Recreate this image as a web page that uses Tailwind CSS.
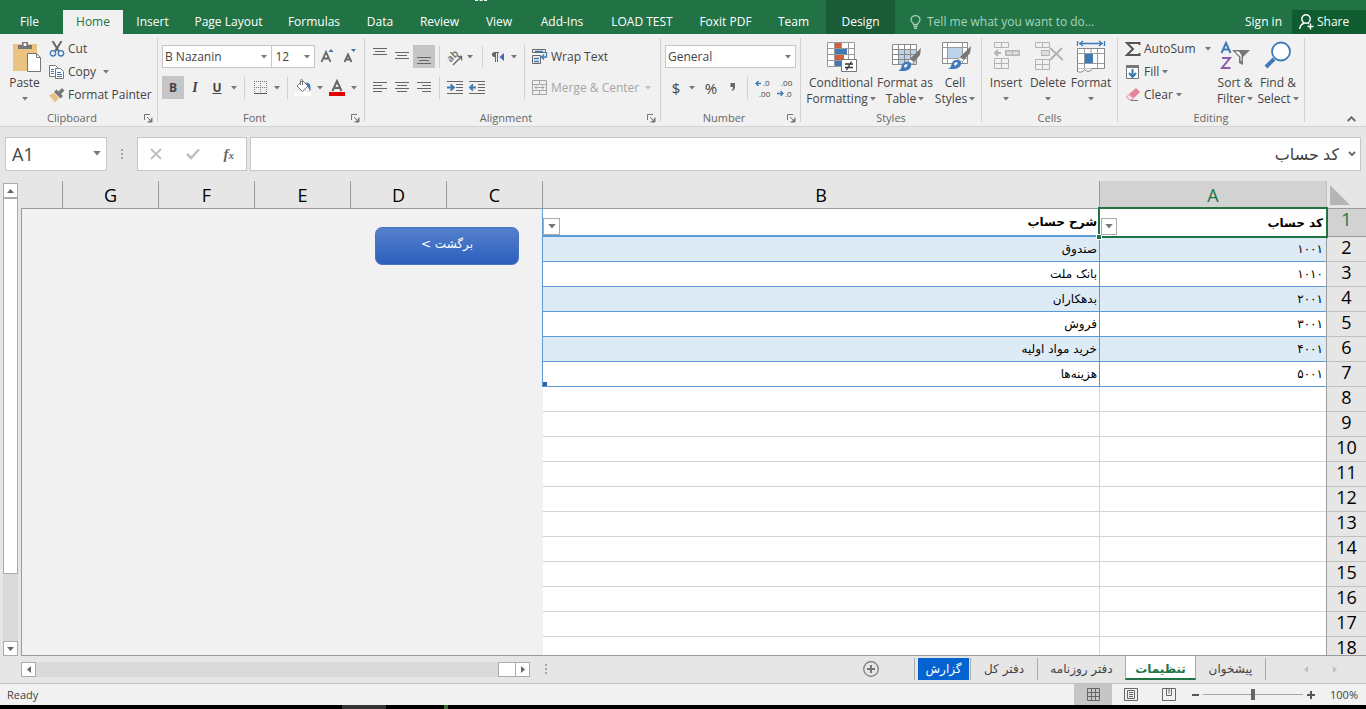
<!DOCTYPE html>
<html lang="en">
<head>
    <meta charset="UTF-8">
    <meta name="viewport" content="width=device-width, initial-scale=1.0">
    <title>تنظیمات - Excel</title>
    <script src="https://cdn.jsdelivr.net/npm/@tailwindcss/browser@4"></script>
</head>
<body class="h-screen flex flex-col overflow-hidden bg-[#e6e6e6] text-[#444] text-[12px] leading-4 font-['Open_Sans','DejaVu_Sans',sans-serif]">

<!-- shared icons -->
<svg class="hidden">
    <symbol id="caret" viewBox="0 0 6 4"><path d="M0 0h6L3 3.5z" fill="#777"/></symbol>
    <symbol id="launcher" viewBox="0 0 9 9"><path d="M.5 6V.5H6M3 3l4 4M8 3.500V8H3.500" fill="none" stroke="#777"/><path d="M8 4v4H4z" fill="#777"/></symbol>
    <symbol id="brush" viewBox="0 0 24 24"><path d="M23 0l-1 7-6 7-4-3z" fill="#777"/><path d="M12 11l4 3-2 2-4-3z" fill="#fff" stroke="#777" stroke-width=".6"/><path d="M0 23c3-1 3-3 4-6 2-4 7-4 9-1 1 4-3 7-7 7z" fill="#3e7ab8"/><path d="M6 18c1-2 3-2 4-1-1 0-1 2-3 3z" fill="#fff"/></symbol>
</svg>

<!-- ribbon tabs -->
<header class="relative flex h-[34px] shrink-0 items-end bg-[#217346] text-white">
    <span class="absolute left-[475px] top-0 h-px w-3 border-t border-dashed border-white"></span>
    <nav class="flex h-6">
        <button class="w-[63px] pr-1">File</button>
        <button class="w-[60px] bg-[#f1f1f1] text-[#217346]">Home</button>
        <button class="w-[59px]">Insert</button>
        <button class="w-[93px]">Page Layout</button>
        <button class="w-[78px]">Formulas</button>
        <button class="w-[54px]">Data</button>
        <button class="w-[65px]">Review</button>
        <button class="w-[54px]">View</button>
        <button class="w-[72px]">Add-Ins</button>
        <button class="w-[88px]">LOAD TEST</button>
        <button class="w-[79px]">Foxit PDF</button>
        <button class="w-[61px] pr-1">Team</button>
    </nav>
    <button class="h-full w-[69px] bg-[#1a5c38] pt-[10px]">Design</button>
    <label class="flex h-6 flex-1 items-center gap-[6px] pl-[15px] text-[#a6d3b9]">
        <svg class="h-[14px] w-[11px]" viewBox="0 0 11 14" fill="none" stroke="#a6d3b9" stroke-width="1.3"><path d="M3.500 9.500C3.500 8 1 7 1 4.800a4.500 4.200 0 0 1 9 0C10 7 7.500 8 7.500 9.500zM3.500 11.500h4M4 13.300h3"/></svg>
        <input type="text" placeholder="Tell me what you want to do..." aria-label="Tell me what you want to do" class="w-[200px] bg-transparent outline-none placeholder:text-[#a6d3b9]">
    </label>
    <button class="h-6 px-[10px]">Sign in</button>
    <button class="flex h-6 w-[74px] items-center gap-[3px] bg-[#0e5c2f] pl-[7px]">
        <svg class="h-4 w-[15px]" viewBox="0 0 15 16" fill="none" stroke="#fff" stroke-width="1.4"><circle cx="7" cy="5" r="4.200"/><path d="M.7 15c.3-3 2-5 4.500-6M8.800 9l1.200 1M11.500 9.500v6M8.500 12.500h6"/></svg>
        Share
    </button>
</header>

<!-- ribbon -->
<section class="flex h-[93px] shrink-0 border-b border-[#d2d2d2] bg-[#f1f1f1] pt-1">

    <div class="flex h-[84px] w-[158px] shrink-0 flex-col border-r border-[#d2d2d2]">
        <div class="flex h-[76px]">
            <button class="flex w-[49px] flex-col items-center">
                <svg class="mt-[3px] h-[34px] w-8" viewBox="0 0 32 34"><path d="M4 3h24v27H4z" fill="#eac282"/><path d="M9 8V4h4V1h6v3h4v4z" fill="#777"/><circle cx="16" cy="3.500" r="1.500" fill="#fff"/><path d="M18.500 12.500h9l4 4v14h-13z" fill="#fff" stroke="#777"/><path d="M27.500 12.500v4h4" fill="none" stroke="#777"/></svg>
                <span>Paste</span>
                <svg class="mt-1.5 h-1 w-1.5"><use href="#caret"/></svg>
            </button>
            <div class="flex flex-col gap-[2px] whitespace-nowrap">
                <button class="flex h-[21px] items-center gap-[3px]">
                    <svg class="h-4 w-4" viewBox="0 0 16 16" fill="none"><path d="M3.500 0l6.500 10.500M12.500 0L6 10.500" stroke="#666" stroke-width="2"/><circle cx="4" cy="12.300" r="2.700" stroke="#3e7ab8" stroke-width="1.300"/><circle cx="12" cy="12.300" r="2.700" stroke="#3e7ab8" stroke-width="1.300"/></svg>
                    Cut
                </button>
                <button class="flex h-[21px] items-center gap-[3px]">
                    <svg class="h-4 w-4" viewBox="0 0 16 16" fill="#fff" stroke="#777"><path d="M.5 1.500h6l2 2v9h-8z"/><path d="M2 5.500h3M2 7.500h3M2 9.500h3" stroke="#3e7ab8"/><path d="M6.500 4.500h5l3 3v7h-8z"/><path d="M8 8.500h4M8 10.500h5M8 12.500h5" stroke="#3e7ab8"/></svg>
                    Copy
                    <svg class="ml-1 h-1 w-1.5"><use href="#caret"/></svg>
                </button>
                <button class="flex h-[21px] items-center gap-[3px]">
                    <svg class="h-4 w-4" viewBox="0 0 16 16"><path d="M0 8l5-2 5 5-4 4.500z" fill="#eac282"/><path d="M5 5l2.500-2.500L14 9l-2.500 2.500z" fill="#777"/><path d="M9 5l4-4 2.500 2.500-4 4z" fill="#777"/></svg>
                    Format Painter
                </button>
            </div>
        </div>
        <div class="flex h-[8px] items-center pr-[4px] text-[11px] text-[#666]"><span class="flex-1 text-center">Clipboard</span><svg class="h-[9px] w-[9px]"><use href="#launcher"/></svg></div>
    </div>

    <div class="flex h-[84px] w-[207px] shrink-0 flex-col border-r border-[#d2d2d2]">
        <div class="flex h-[76px] flex-col gap-2 pl-1 pt-[7px]">
            <div class="flex h-[23px] items-center">
                <div class="relative h-[23px] w-[111px]">
                    <select aria-label="Font" class="h-full w-full appearance-none border border-[#c6c6c6] bg-white pl-[2px]"><option>B Nazanin</option></select>
                    <svg class="absolute right-[5px] top-[10px] h-1 w-1.5"><use href="#caret"/></svg>
                </div>
                <div class="relative h-[23px] w-[43px]">
                    <select aria-label="Font size" class="h-full w-full appearance-none border border-l-0 border-[#c6c6c6] bg-white pl-[3px]"><option>12</option></select>
                    <svg class="absolute right-[5px] top-[10px] h-1 w-1.5"><use href="#caret"/></svg>
                </div>
                <button aria-label="Increase font size" class="ml-[5px] w-[22px]"><svg class="h-5 w-[14px]" viewBox="0 0 14 20"><path d="M1.500 15L6 5l4.500 10M3 11.500h6" fill="none" stroke="#666" stroke-width="1.800"/><path d="M8.500 5L11 2l2.500 3z" fill="#3e6db5"/></svg></button>
                <button aria-label="Decrease font size" class="w-[22px]"><svg class="h-5 w-[14px]" viewBox="0 0 14 20"><path d="M2.500 15L6 7.500 9.500 15M4 12.500h4" fill="none" stroke="#666" stroke-width="1.800"/><path d="M9 2h5l-2.500 3z" fill="#3e6db5"/></svg></button>
            </div>
            <div class="flex h-[23px] items-center">
                <button class="h-full w-[22px] bg-[#c5c5c5] font-bold">B</button>
                <button class="h-full w-[22px] font-['Liberation_Serif',serif] text-[14px] font-bold italic">I</button>
                <button class="h-full w-[22px] font-bold underline">U</button>
                <svg class="mx-[3px] h-1 w-1.5"><use href="#caret"/></svg>
                <span class="mx-1 h-[22px] w-px bg-[#d2d2d2]"></span>
                <button aria-label="Borders" class="flex w-[22px] justify-center"><svg class="h-[13px] w-[13px]" viewBox="0 0 13 13" fill="none" stroke="#777"><path d="M0 .5h13M0 6.500h13M.5 0v12M6.500 0v12M12.500 0v12" stroke-dasharray="1 1"/><path d="M0 12.500h13" stroke="#555"/></svg></button>
                <svg class="mx-[3px] h-1 w-1.5"><use href="#caret"/></svg>
                <span class="mx-1 h-[22px] w-px bg-[#d2d2d2]"></span>
                <button aria-label="Fill color" class="flex w-[22px] justify-center"><svg class="h-[17px] w-4" viewBox="0 0 16 17"><path d="M0 13h16v4H0z" fill="#fff"/><path d="M2 7l5.500-5.500L13 7l-5.500 5.500zM5.500 6V1.500c0-1.500 2-1.500 2 0V6" fill="#fff" stroke="#777"/><path d="M11 3.500c4 0 5.500 3 4 9.500-1-3-1-4-2.500-5.500z" fill="#3e7ab8"/></svg></button>
                <svg class="mx-[3px] h-1 w-1.5"><use href="#caret"/></svg>
                <button aria-label="Font color" class="flex w-[22px] justify-center"><svg class="h-[17px] w-4" viewBox="0 0 16 17"><path d="M3.500 12L8 2l4.500 10M5 9h6" fill="none" stroke="#666" stroke-width="2"/><path d="M0 13h16v4H0z" fill="#e50000"/></svg></button>
                <svg class="mx-[3px] h-1 w-1.5"><use href="#caret"/></svg>
            </div>
        </div>
        <div class="flex h-[8px] items-center pr-[4px] text-[11px] text-[#666]"><span class="flex-1 text-center">Font</span><svg class="h-[9px] w-[9px]"><use href="#launcher"/></svg></div>
    </div>

    <div class="flex h-[84px] w-[296px] shrink-0 flex-col border-r border-[#d2d2d2]">
        <div class="flex h-[76px] pl-1 pt-[7px]">
            <div class="flex h-[54px] w-[156px] flex-col gap-2 border-r border-[#d2d2d2]">
                <div class="flex h-[23px] items-center">
                    <button aria-label="Top align" class="flex h-full w-[22px] justify-center pt-[2px]"><svg class="h-4 w-[14px]" viewBox="0 0 14 16" stroke="#666"><path d="M0 1.500h14M2 4.500h10M0 7.500h14"/></svg></button>
                    <button aria-label="Middle align" class="flex h-full w-[22px] justify-center pt-[3px]"><svg class="h-4 w-[14px]" viewBox="0 0 14 16" stroke="#666"><path d="M0 4.500h14M2 7.500h10M0 10.500h14"/></svg></button>
                    <button aria-label="Bottom align" class="flex h-full w-[22px] justify-center bg-[#c5c5c5] pt-[4px]"><svg class="h-4 w-[14px]" viewBox="0 0 14 16" stroke="#666"><path d="M0 8.500h14M2 11.500h10M0 14.500h14"/></svg></button>
                    <span class="mx-1 h-[22px] w-px bg-[#d2d2d2]"></span>
                    <button aria-label="Orientation" class="flex w-[22px] justify-center"><svg class="h-[22px] w-[22px]" viewBox="0 0 22 22"><text x="3" y="14" transform="rotate(-45 8 11)" font-size="10" font-weight="600" fill="#666">ab</text><path d="M9 19l8-8M13.500 10.500H17.500v4" fill="none" stroke="#666" stroke-width="1.300"/></svg></button>
                    <svg class="mx-px h-1 w-1.5"><use href="#caret"/></svg>
                    <span class="ml-[8px] mr-[5px] h-[22px] w-px bg-[#d2d2d2]"></span>
                    <button aria-label="Text direction" class="flex w-[20px] justify-center"><svg class="h-3 w-[14px]" viewBox="0 0 14 12"><path d="M8 1H3.500a2.500 2.500 0 0 0 0 5H4v5h1V2h1v9h1V2h1z" fill="#666"/><path d="M13 2v8L8.500 6z" fill="#3e6db5"/></svg></button>
                    <svg class="mx-[3px] h-1 w-1.5"><use href="#caret"/></svg>
                </div>
                <div class="flex h-[23px] items-center">
                    <button aria-label="Align left" class="flex w-[22px] justify-center"><svg class="h-3 w-[14px]" viewBox="0 0 14 12" stroke="#666"><path d="M0 .5h14M0 3.500h9M0 6.500h14M0 9.500h9"/></svg></button>
                    <button aria-label="Center" class="flex w-[22px] justify-center"><svg class="h-3 w-[14px]" viewBox="0 0 14 12" stroke="#666"><path d="M0 .5h14M2 3.500h10M0 6.500h14M2 9.500h10"/></svg></button>
                    <button aria-label="Align right" class="flex w-[22px] justify-center"><svg class="h-3 w-[14px]" viewBox="0 0 14 12" stroke="#666"><path d="M0 .5h14M5 3.500h9M0 6.500h14M5 9.500h9"/></svg></button>
                    <span class="mx-1 h-[22px] w-px bg-[#d2d2d2]"></span>
                    <button aria-label="Decrease indent" class="flex w-[22px] justify-center"><svg class="h-[13px] w-4" viewBox="0 0 16 13" fill="none" stroke="#666"><path d="M0 .5h16M9 3.500h7M9 6.500h7M9 9.500h7M0 12.500h16"/><path d="M0 6.500h6M3.500 3.500L7 6.500 3.500 9.500" stroke="#3e7ab8" stroke-width="1.800"/></svg></button>
                    <button aria-label="Increase indent" class="flex w-[22px] justify-center"><svg class="h-[13px] w-4" viewBox="0 0 16 13" fill="none" stroke="#666"><path d="M0 .5h16M9 3.500h7M9 6.500h7M9 9.500h7M0 12.500h16"/><path d="M1 6.500h6M4 3.500L1 6.500l3 3" stroke="#3e7ab8" stroke-width="1.800"/></svg></button>
                </div>
            </div>
            <div class="flex flex-col gap-2 whitespace-nowrap pl-[7px]">
                <button class="flex h-[23px] items-center gap-[3px]">
                    <svg class="h-4 w-4" viewBox="0 0 16 16" fill="none" stroke="#666"><path d="M.5.500h13v3H.5zM.5 6.500h8v8H.5z"/><path d="M2 9.500h5M2 12.500h5M3 2.500h8M14.500 3v5H10M12 5.500L9.500 8l2.500 2.500" stroke="#3e7ab8" stroke-width="1.300"/></svg>
                    Wrap Text
                </button>
                <button disabled class="flex h-[23px] items-center gap-[3px] text-[#a6a6a6]">
                    <svg class="h-4 w-4" viewBox="0 0 16 16" fill="none" stroke="#a6a6a6"><path d="M.5.500h14v14H.5zM.5 4.500h14M.5 10.500h14M7.500.500v4M7.500 10.500v4M3 7.500h9M5 5.500l-2 2 2 2M10 5.500l2 2-2 2"/></svg>
                    Merge &amp; Center
                    <svg class="ml-[3px] h-1 w-1.5 opacity-40"><use href="#caret"/></svg>
                </button>
            </div>
        </div>
        <div class="flex h-[8px] items-center pr-[4px] text-[11px] text-[#666]"><span class="flex-1 text-center">Alignment</span><svg class="h-[9px] w-[9px]"><use href="#launcher"/></svg></div>
    </div>

    <div class="flex h-[84px] w-[140px] shrink-0 flex-col border-r border-[#d2d2d2]">
        <div class="flex h-[76px] flex-col gap-2 pl-1 pt-[7px]">
            <div class="relative h-[23px] w-[131px]">
                <select aria-label="Number format" class="h-full w-full appearance-none border border-[#c6c6c6] bg-white pl-[2px]"><option>General</option></select>
                <svg class="absolute right-[5px] top-[10px] h-1 w-1.5"><use href="#caret"/></svg>
            </div>
            <div class="flex h-[23px] items-center">
                <button class="w-[22px] text-[15px]">$</button>
                <svg class="mx-[2px] h-1 w-1.5"><use href="#caret"/></svg>
                <button class="ml-[3px] w-[22px] text-[15px]">%</button>
                <button aria-label="Comma style" class="flex w-[22px] justify-center"><svg class="h-[14px] w-2" viewBox="0 0 8 14"><path d="M1.500 2h4.500v4c0 2-1 3-3 4l-.5-1C4 8.500 4 7 4 6H1.500z" fill="#666"/></svg></button>
                <span class="ml-[3px] mr-1 h-[22px] w-px bg-[#d2d2d2]"></span>
                <button aria-label="Increase decimal" class="flex w-[22px] justify-center"><svg class="h-[22px] w-5" viewBox="0 0 20 22"><text x="10" y="9" font-size="8" fill="#444">.0</text><text x="6" y="20" font-size="8" fill="#444">.00</text><path d="M3 6.500h5M5.500 4L3 6.500 5.500 9" fill="none" stroke="#3e7ab8" stroke-width="1.300"/></svg></button>
                <button aria-label="Decrease decimal" class="flex w-[22px] justify-center"><svg class="h-[22px] w-5" viewBox="0 0 20 22"><text x="6" y="9" font-size="8" fill="#444">.00</text><text x="10" y="20" font-size="8" fill="#444">.0</text><path d="M2 16.500h6M5.500 14L8 16.500 5.500 19" fill="none" stroke="#3e7ab8" stroke-width="1.300"/></svg></button>
            </div>
        </div>
        <div class="flex h-[8px] items-center pr-[4px] text-[11px] text-[#666]"><span class="flex-1 text-center">Number</span><svg class="h-[9px] w-[9px]"><use href="#launcher"/></svg></div>
    </div>

    <div class="flex h-[84px] w-[181px] shrink-0 flex-col border-r border-[#d2d2d2]">
        <div class="flex h-[76px] justify-center">
            <button class="flex w-[72px] flex-col items-center whitespace-nowrap">
                <svg class="mt-[3px] h-[34px] w-[34px]" viewBox="0 0 34 34"><path d="M3.500 1.500h27v24h-27z" fill="#fff"/><path d="M11 2h6v5h-6zM11 14h9v5h-9z" fill="#d35e3c"/><path d="M11 8h12v5H11zM11 20h6v5h-6z" fill="#3e7ab8"/><path d="M3.500 1.500h27v24h-27zM10.500 1.500v24M17.500 1.500v24M24.500 1.500v24M3.500 7.500h27M3.500 13.500h27M3.500 19.500h27" fill="none" stroke="#999"/><path d="M11 2h6v5h-6zM11 14h9v5h-9z" fill="#d35e3c"/><path d="M11 8h12v5H11zM11 20h6v5h-6z" fill="#3e7ab8"/><path d="M17.500 18.500h15v12h-15z" fill="#fff" stroke="#777"/><path d="M21 23h8M21 26.500h8M27.500 20.500l-5 8.500" stroke="#333" stroke-width="1.300"/></svg>
                <span>Conditional</span>
                <span class="flex items-center gap-[2px]">Formatting <svg class="h-1 w-1.5"><use href="#caret"/></svg></span>
            </button>
            <button class="flex w-[56px] flex-col items-center whitespace-nowrap">
                <svg class="mt-[3px] h-[34px] w-[34px]" viewBox="0 0 34 34"><path d="M4.500 3.500h24v20h-24z" fill="#fff"/><path d="M10 9h18v14H10z" fill="#bdd3ea"/><path d="M4.500 3.500h24v20h-24zM10.500 3.500v20M16.500 3.500v20M22.500 3.500v20M4.500 8.500h24M4.500 13.500h24M4.500 18.500h24" fill="none" stroke="#888"/><use href="#brush" x="10" y="7" width="24" height="24"/></svg>
                <span>Format as</span>
                <span class="flex items-center gap-[2px]">Table <svg class="h-1 w-1.5"><use href="#caret"/></svg></span>
            </button>
            <button class="flex w-[44px] flex-col items-center whitespace-nowrap">
                <svg class="mt-[3px] h-[34px] w-[34px]" viewBox="0 0 34 34"><path d="M4.500 1.500h25v21h-25z" fill="#fff" stroke="#888"/><path d="M4.500 6.500h25M4.500 17.500h25M9.500 1.500v21M24.500 1.500v21" stroke="#999"/><path d="M10 7h14v10H10z" fill="#bdd3ea"/><use href="#brush" x="10" y="5" width="24" height="24"/></svg>
                <span>Cell</span>
                <span class="flex items-center gap-[2px]">Styles <svg class="h-1 w-1.5"><use href="#caret"/></svg></span>
            </button>
        </div>
        <div class="flex h-[8px] items-center justify-center text-[11px] text-[#666]">Styles</div>
    </div>

    <div class="flex h-[84px] w-[136px] shrink-0 flex-col border-r border-[#d2d2d2]">
        <div class="flex h-[76px] pl-[3px]">
            <button class="flex w-[42px] flex-col items-center">
                <svg class="mt-[3px] h-[34px] w-[30px]" viewBox="0 0 30 34" fill="#f1f1f1" stroke="#b5b0b5"><path d="M3.500 1.500h14v5h-14zM10.500 1.500v5M3.500 17.500h14v10h-14zM10.500 17.500v10M3.500 22.500h14M14.500 9.500h14v5h-14z"/><path d="M15 10h13v4H15z" fill="#ddd"/><path d="M21.500 9.500v5"/><path d="M4 12h6M7 9l-3 3 3 3" fill="none" stroke-width="1.800"/></svg>
                <span>Insert</span>
                <svg class="mt-1.5 h-1 w-1.5"><use href="#caret"/></svg>
            </button>
            <button class="flex w-[42px] flex-col items-center">
                <svg class="mt-[3px] h-[34px] w-[30px]" viewBox="0 0 30 34" fill="#f1f1f1" stroke="#b5b0b5"><path d="M2.500 1.500h14v5h-14zM9.500 1.500v5M2.500 18.500h14v10h-14zM9.500 18.500v10M2.500 23.500h14"/><path d="M8.500 9.500h8v5h-8z" fill="#ddd"/><path d="M17 7l13 12M29 7L17 19" fill="none" stroke-width="2"/></svg>
                <span>Delete</span>
                <svg class="mt-1.5 h-1 w-1.5"><use href="#caret"/></svg>
            </button>
            <button class="flex w-[44px] flex-col items-center">
                <svg class="mt-[2px] h-[35px] w-[30px]" viewBox="0 0 30 35" fill="none"><path d="M1.500 1v5M28.500 1v5M3 3.500h24M7 1L4 3.500 7 6M23 1l3 2.500L23 6" stroke="#3e7ab8" stroke-width="1.300"/><path d="M1.500 8.500h27v20h-27z" fill="#fff" stroke="#888"/><path d="M8.500 8.500v20M21.500 8.500v20M1.500 13.500h27M1.500 23.500h27M15 8.500v5" stroke="#999"/><path d="M9 14h8v9H9z" fill="#3e7ab8"/><path d="M1.500 28.500v3c3 1 5 1 7-2 3 3 6 2 8-1" fill="#fff" stroke="#777"/></svg>
                <span>Format</span>
                <svg class="mt-1.5 h-1 w-1.5"><use href="#caret"/></svg>
            </button>
        </div>
        <div class="flex h-[8px] items-center justify-center text-[11px] text-[#666]">Cells</div>
    </div>

    <div class="flex h-[84px] w-[187px] shrink-0 flex-col border-r border-[#d2d2d2]">
        <div class="flex h-[76px] pl-[7px]">
            <div class="flex w-[89px] flex-col gap-[2px]">
                <button class="flex h-[21px] items-center gap-[3px]">
                    <svg class="h-4 w-4" viewBox="0 0 16 16"><path d="M14.500 4V2H2l6 6-6 6h12.500v-2" fill="none" stroke="#555" stroke-width="2"/></svg>
                    AutoSum
                    <svg class="ml-1.5 h-1 w-1.5"><use href="#caret"/></svg>
                </button>
                <button class="flex h-[21px] items-center gap-[3px]">
                    <svg class="h-4 w-4" viewBox="0 0 16 16" fill="none"><path d="M1.500 1.500h12v13h-12z" fill="#fff" stroke="#777"/><path d="M1 1h13v3H1z" fill="#777"/><path d="M7.500 5v8M4 9l3.500 4L11 9" stroke="#3e7ab8" stroke-width="2"/></svg>
                    Fill
                    <svg class="h-1 w-1.5"><use href="#caret"/></svg>
                </button>
                <button class="flex h-[21px] items-center gap-[3px]">
                    <svg class="h-4 w-4" viewBox="0 0 16 16"><path d="M4 7l7-6 4 4-6 6z" fill="#e8839b"/><path d="M4 7.500L1.500 10l3 3h2l2-2z" fill="#fbe3e8" stroke="#e8839b"/><path d="M6 13.500h7" stroke="#777"/></svg>
                    Clear
                    <svg class="h-1 w-1.5"><use href="#caret"/></svg>
                </button>
            </div>
            <button class="flex w-[42px] flex-col items-center whitespace-nowrap">
                <svg class="mt-[3px] h-[34px] w-[32px]" viewBox="0 0 32 34" fill="none"><path d="M2.500 12L7 2l4.500 10M4 8.500h6" stroke="#3e7ab8" stroke-width="2"/><path d="M3 17h8L3 27h8.500" stroke="#8b5ca8" stroke-width="2"/><path d="M13 9h18l-7 7v8l-4-2v-6z" fill="#777"/><path d="M16 10.500h4l2.500 4v6l-1-1v-4z" fill="#fff"/></svg>
                <span>Sort &amp;</span>
                <span class="flex items-center gap-[2px]">Filter <svg class="h-1 w-1.5"><use href="#caret"/></svg></span>
            </button>
            <button class="flex w-[44px] flex-col items-center whitespace-nowrap">
                <svg class="mt-[3px] h-[34px] w-[32px]" viewBox="0 0 32 34"><path d="M12 18L4 26" stroke="#3e7ab8" stroke-width="4"/><circle cx="19" cy="10.500" r="9" fill="#fff" stroke="#3e7ab8" stroke-width="1.800"/></svg>
                <span>Find &amp;</span>
                <span class="flex items-center gap-[2px]">Select <svg class="h-1 w-1.5"><use href="#caret"/></svg></span>
            </button>
        </div>
        <div class="flex h-[8px] items-center justify-center text-[11px] text-[#666]">Editing</div>
    </div>

    <button aria-label="Collapse the ribbon" class="ml-auto self-end pb-1 pr-[10px]"><svg class="h-[6px] w-[9px]" viewBox="0 0 9 6"><path d="M.7 5L4.500 1.300 8.300 5" fill="none" stroke="#666" stroke-width="1.800"/></svg></button>
</section>

<!-- formula bar -->
<section class="flex h-[54px] shrink-0 items-start pl-[5px] pr-[5px] pt-[10px]">
    <div class="relative h-[34px] w-[102px]">
        <input type="text" value="A1" aria-label="Name box" class="h-full w-full border border-[#c6c6c6] bg-white pl-[6px] text-[18px]">
        <svg class="absolute right-[6px] top-[14px] h-[5px] w-2"><use href="#caret"/></svg>
    </div>
    <svg class="mx-[14px] mt-3 h-[10px] w-[2px]" viewBox="0 0 2 10" fill="#a6a6a6"><path d="M0 0h2v2H0zM0 4h2v2H0zM0 8h2v2H0z"/></svg>
    <div class="flex h-[34px] w-[110px] items-center justify-around border border-[#c6c6c6] bg-white">
        <button aria-label="Cancel"><svg class="h-3 w-3" viewBox="0 0 12 12"><path d="M1 1l10 10M11 1L1 11" stroke="#bdbdbd" stroke-width="1.800"/></svg></button>
        <button aria-label="Enter"><svg class="h-3 w-[14px]" viewBox="0 0 14 12"><path d="M1 6l4 4 8-8.500" fill="none" stroke="#bdbdbd" stroke-width="2.500"/></svg></button>
        <button class="font-['Liberation_Serif',serif] text-[15px] font-bold italic text-[#666]">f<span class="text-[11px]">x</span></button>
    </div>
    <div class="ml-[3px] flex h-[34px] flex-1 items-center border border-[#c6c6c6] bg-white pr-1">
        <input type="text" dir="rtl" value="کد حساب" aria-label="Formula bar" class="min-w-0 flex-1 bg-transparent pr-[9px] text-[16px] outline-none">
        <button aria-label="Expand formula bar"><svg class="h-[6px] w-2" viewBox="0 0 8 6"><path d="M1 1l3 3 3-3" fill="none" stroke="#666" stroke-width="1.800"/></svg></button>
    </div>
</section>

<!-- worksheet -->
<main class="flex min-h-0 flex-1">
    <div class="flex w-[21px] shrink-0 flex-col pl-[3px] pr-[3px] pt-[2px]">
        <button aria-label="Scroll up" class="flex h-[15px] items-center justify-center border border-[#ababab] bg-white"><svg class="h-1 w-[7px]" viewBox="0 0 7 4"><path d="M0 4h7L3.500 0z" fill="#666"/></svg></button>
        <div class="flex flex-1 flex-col bg-[#dadada]"><div class="h-[376px] border border-[#ababab] bg-white"></div></div>
        <button aria-label="Scroll down" class="flex h-[15px] items-center justify-center border border-[#ababab] bg-white"><svg class="h-1 w-[7px]" viewBox="0 0 7 4"><path d="M0 0h7L3.500 4z" fill="#666"/></svg></button>
    </div>
    <div class="relative min-w-0 flex-1 overflow-hidden border-b border-[#9b9b9b]">
        <table dir="rtl" class="w-full table-fixed border-separate border-spacing-0">
            <colgroup>
                <col class="w-[40px]"><col class="w-[227px]"><col>
                <col class="w-[96px]"><col class="w-[96px]"><col class="w-[96px]"><col class="w-[96px]"><col class="w-[96px]"><col class="w-[41px]">
            </colgroup>
            <thead>
                <tr class="h-[28px] text-[18px] leading-[22px] text-black">
                    <th class="border-b border-l border-[#9b9b9b] border-l-[#c0c0c0] p-0"><svg class="ml-[3px] mr-auto h-5 w-5" viewBox="0 0 20 20"><path d="M0 0v20h20z" fill="#b5b5b5"/></svg></th>
                    <th class="border-b border-l border-[#9b9b9b] bg-[#d2d2d2] p-0 font-normal text-[#217346]">A</th>
                    <th class="border-b border-l border-[#9b9b9b] p-0 font-normal">B</th>
                    <th class="border-b border-l border-[#9b9b9b] p-0 font-normal">C</th>
                    <th class="border-b border-l border-[#9b9b9b] p-0 font-normal">D</th>
                    <th class="border-b border-l border-[#9b9b9b] p-0 font-normal">E</th>
                    <th class="border-b border-l border-[#9b9b9b] p-0 font-normal">F</th>
                    <th class="border-b border-l border-[#9b9b9b] p-0 font-normal">G</th>
                    <th class="border-b border-[#9b9b9b] p-0"></th>
                </tr>
            </thead>
            <tbody id="rows" class="font-['DejaVu_Sans',sans-serif] text-[12px] leading-4 text-black">
                <tr class="h-[28px] bg-white">
                    <th class="border-b border-l border-[#9b9b9b] bg-[#d2d2d2] p-0 align-top font-['Open_Sans',sans-serif] text-[18px] font-normal leading-[20px] text-[#217346]">1</th>
                    <th class="relative border-b border-l border-[#5b9bd5] p-0 pr-[3px] text-right font-bold">کد حساب
                        <span class="absolute -inset-[2px] z-10 border-2 border-[#217346]"></span>
                        <span class="absolute -bottom-[4px] -left-[4px] z-10 h-[6px] w-[6px] border border-white bg-[#217346]"></span>
                        <button aria-label="Filter" class="absolute bottom-px left-[1px] z-10 flex h-[17px] w-[16px] items-center justify-center border border-[#ababab] bg-white"><svg class="h-[5px] w-2"><use href="#caret"/></svg></button>
                    </th>
                    <th class="relative border-b-2 border-l border-[#5b9bd5] p-0 pr-[2px] text-right font-bold">شرح حساب
                        <button aria-label="Filter" class="absolute bottom-0 left-0 flex h-[17px] w-[17px] items-center justify-center border border-[#ababab] bg-white"><svg class="h-[5px] w-2"><use href="#caret"/></svg></button>
                    </th>
                    <td colspan="6" rowspan="18" class="border-l border-[#9b9b9b] bg-[#f1f1f1] p-0 pr-[23px] pt-[18px] text-right align-top">
                        <button class="h-[38px] w-[144px] rounded-[7px] border border-[#4a74bf] bg-linear-to-b from-[#5580cc] to-[#2b5fbd] pb-1 text-[12px] text-white">برگشت &gt;</button>
                    </td>
                </tr>
            </tbody>
        </table>
    </div>
</main>

<!-- sheet tabs -->
<section class="flex h-[28px] shrink-0 items-start border-b border-[#c0c0c0] pl-[21px] font-['DejaVu_Sans',sans-serif] text-[12px]">
    <button aria-label="Scroll left" class="mt-[6px] flex h-[15px] w-[15px] items-center justify-center border border-[#ababab] bg-white"><svg class="h-[7px] w-1" viewBox="0 0 4 7"><path d="M4 0v7L0 3.500z" fill="#666"/></svg></button>
    <div class="mt-[6px] flex h-[15px] w-[479px] justify-end bg-[#dadada]"><div class="w-[17px] border border-r-0 border-[#ababab] bg-white"></div></div>
    <button aria-label="Scroll right" class="mt-[6px] flex h-[15px] w-[15px] items-center justify-center border border-[#ababab] bg-white"><svg class="h-[7px] w-1" viewBox="0 0 4 7"><path d="M0 0v7l4-3.500z" fill="#666"/></svg></button>
    <svg class="ml-[15px] mt-2 h-[10px] w-[2px]" viewBox="0 0 2 10" fill="#a6a6a6"><path d="M0 0h2v2H0zM0 4h2v2H0zM0 8h2v2H0z"/></svg>
    <button aria-label="New sheet" class="ml-auto mt-[5px]"><svg class="h-4 w-4" viewBox="0 0 16 16" fill="none" stroke="#777"><circle cx="8" cy="8" r="7.300" stroke-width="1.200"/><path d="M8 4v8M4 8h8" stroke-width="2"/></svg></button>
    <div class="ml-[35px] mt-[2px] flex h-[22px] border-l border-[#ababab] pl-[3px]">
        <button class="w-[51px] bg-[#0563d1] text-white">گزارش</button>
        <button class="ml-px w-[68px] border-x border-[#ababab]">دفتر کل</button>
        <button class="w-[87px]">دفتر روزنامه</button>
    </div>
    <button class="h-[24px] w-[71px] border-x border-b-2 border-x-[#ababab] border-b-[#217346] bg-white pt-[3px] font-bold text-[#217346]">تنظیمات</button>
    <button class="mt-[2px] h-[22px] w-[70px] border-r border-[#ababab]">پیشخوان</button>
    <div class="mt-[10px] flex w-[100px] items-center gap-[25px] pl-[38px]">
        <svg class="h-[7px] w-1" viewBox="0 0 4 7"><path d="M4 0v7L0 3.500z" fill="#c0c0c0"/></svg>
        <svg class="h-[7px] w-1" viewBox="0 0 4 7"><path d="M0 0v7l4-3.500z" fill="#c0c0c0"/></svg>
    </div>
</section>

<!-- status bar -->
<footer class="flex h-[21px] shrink-0 items-center bg-[#f1f1f1] pl-[7px] pr-[8px] text-[11px]">
    <span class="mr-auto">Ready</span>
    <button aria-label="Normal view" class="flex h-full w-[38px] items-center justify-center bg-[#c6c6c6]"><svg class="h-[13px] w-[13px]" viewBox="0 0 13 13"><path d="M.5.500h12v12H.5zM4.500.500v12M8.500.500v12M.5 4.500h12M.5 8.500h12" fill="none" stroke="#666"/></svg></button>
    <button aria-label="Page layout view" class="flex h-full w-[38px] items-center justify-center"><svg class="h-[13px] w-[14px]" viewBox="0 0 14 13"><path d="M.5.500h13v12H.5zM3.500 2.500h7v8h-7zM5 4.500h4M5 6.500h4M5 8.500h4" fill="none" stroke="#666"/></svg></button>
    <button aria-label="Page break preview" class="flex h-full w-[38px] items-center justify-center"><svg class="h-[13px] w-[14px]" viewBox="0 0 14 13"><path d="M.5.500h13v12H.5zM4.500.500v7h5v-7M7 .5v5" fill="none" stroke="#666"/></svg></button>
    <button aria-label="Zoom out" class="ml-[4px] mr-[4px]"><svg class="h-[8px] w-[7px]" viewBox="0 0 7 8"><path d="M0 4h7" stroke="#555" stroke-width="2"/></svg></button>
    <input type="range" min="0" max="100" value="50" aria-label="Zoom" class="h-px w-[100px] appearance-none bg-[#a6a6a6] [&::-webkit-slider-thumb]:h-[11px] [&::-webkit-slider-thumb]:w-1 [&::-webkit-slider-thumb]:appearance-none [&::-webkit-slider-thumb]:bg-[#666]">
    <button aria-label="Zoom in" class="ml-[4px]"><svg class="h-[8px] w-[8px]" viewBox="0 0 8 8"><path d="M0 4h8M4 0v8" stroke="#555" stroke-width="2"/></svg></button>
    <span class="w-[43px] text-right">100%</span>
</footer>
<div class="flex h-[4px] shrink-0 bg-black pl-[342px]"><span class="w-[44px] bg-[#333]"></span><span class="ml-[58px] w-[4px] bg-[#3a6b35]"></span></div>

<script>
    const accounts = [
        ["۱۰۰۱", "صندوق"],
        ["۱۰۱۰", "بانک ملت"],
        ["۲۰۰۱", "بدهکاران"],
        ["۳۰۰۱", "فروش"],
        ["۴۰۰۱", "خرید مواد اولیه"],
        ["۵۰۰۱", "هزینه‌ها"],
    ];
    const rows = document.getElementById("rows");

    for (let n = 2; n <= 18; n++) {
        const account = accounts[n - 2];
        const head = `<th class="border-b border-l border-[#9b9b9b] border-b-[#c0c0c0] bg-[#e6e6e6] p-0 align-top font-['Open_Sans',sans-serif] text-[18px] font-normal leading-[20px]">${n}</th>`;
        if (account) {
            const fill = n % 2 === 0 ? "bg-[#ddebf7]" : "bg-white";
            const corner = n === 7 ? '<span class="absolute bottom-0 left-0 h-1 w-1 bg-[#2f5fa5]"></span>' : '';
            rows.innerHTML += `
                <tr class="h-[25px] ${fill}">
                    ${head}
                    <td class="border-b border-l border-[#5b9bd5] p-0 pr-[3px] text-right">${account[0]}</td>
                    <td class="relative border-b border-l border-[#5b9bd5] p-0 pr-[2px] text-right">${account[1]}${corner}</td>
                </tr>`;
        } else {
            rows.innerHTML += `
                <tr class="h-[25px] bg-white">
                    ${head}
                    <td class="border-b border-l border-[#d4d4d4] p-0"></td>
                    <td class="border-b border-l border-[#d4d4d4] border-l-[#f1f1f1] p-0"></td>
                </tr>`;
        }
    }
</script>

</body>
</html>
